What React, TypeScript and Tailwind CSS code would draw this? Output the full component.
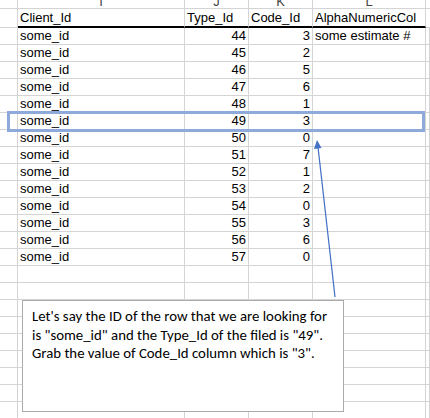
const rows: [number, number, string?][] = [
  [44, 3, "some estimate #"],
  [45, 2],
  [46, 5],
  [47, 6],
  [48, 1],
  [49, 3],
  [50, 0],
  [51, 7],
  [52, 1],
  [53, 2],
  [54, 0],
  [55, 3],
  [56, 6],
  [57, 0],
];

const cell = "shrink-0 border-r border-b border-[#d4d4d4] h-[17px] leading-[16px] whitespace-nowrap overflow-hidden";

function EmptyRow() {
  return (
    <div className="flex">
      <div className={`${cell} w-[18px]`} />
      <div className={`${cell} w-[167px]`} />
      <div className={`${cell} w-[64px]`} />
      <div className={`${cell} w-[64px]`} />
      <div className={`${cell} w-[113px]`} />
      <div className={`${cell} flex-1`} />
    </div>
  );
}

export default function App() {
  return (
    <div className="relative w-[430px] h-[418px] overflow-hidden bg-white text-black text-[13px] font-['Liberation_Sans',Arial,sans-serif]">
      {/* column letters, cut off at the top */}
      <div className="flex h-[9px] border-b border-[#d4d4d4] overflow-hidden text-[#444] leading-[16px]">
        <div className="w-[18px] shrink-0 border-r border-[#d4d4d4]" />
        {[
          ["I", "w-[167px]"],
          ["J", "w-[64px]"],
          ["K", "w-[64px]"],
          ["L", "w-[113px]"],
        ].map(([l, w]) => (
          <div key={l} className={`${w} shrink-0 border-r border-[#d4d4d4] text-center -mt-[6px]`}>
            {l}
          </div>
        ))}
        <div className="flex-1" />
      </div>

      {/* header row */}
      <div className="flex h-[19px] leading-[17px]">
        <div className="w-[18px] shrink-0 border-r border-b border-[#d4d4d4]" />
        <div className="w-[167px] shrink-0 border-r border-[#d4d4d4] border-b-2 border-b-black px-[2px]">Client_Id</div>
        <div className="w-[64px] shrink-0 border-r border-[#d4d4d4] border-b-2 border-b-black px-[2px]">Type_Id</div>
        <div className="w-[64px] shrink-0 border-r border-[#d4d4d4] border-b-2 border-b-black px-[2px]">Code_Id</div>
        <div className="w-[113px] shrink-0 border-r border-[#d4d4d4] border-b-2 border-b-black px-[2px] whitespace-nowrap">AlphaNumericCol</div>
        <div className="flex-1 border-b border-[#d4d4d4]" />
      </div>

      {/* data rows */}
      {rows.map(([type, code, alpha], i) => (
        <div key={type} className="flex">
          <div className={`${cell} w-[18px] ${i === 0 ? "h-[16px]" : ""}`} />
          <div className={`${cell} w-[167px] px-[2px] ${i === 0 ? "h-[16px]" : ""}`}>some_id</div>
          <div className={`${cell} w-[64px] pr-[2px] text-right ${i === 0 ? "h-[16px]" : ""}`}>{type}</div>
          <div className={`${cell} w-[64px] pr-[2px] text-right ${i === 0 ? "h-[16px]" : ""}`}>{code}</div>
          <div className={`${cell} w-[113px] px-[2px] ${i === 0 ? "h-[16px]" : ""}`}>{alpha ?? ""}</div>
          <div className={`${cell} flex-1 ${i === 0 ? "h-[16px]" : ""}`} />
        </div>
      ))}
      {Array.from({ length: 9 }).map((_, i) => (
        <EmptyRow key={i} />
      ))}

      {/* highlight around row 49 */}
      <div className="absolute left-[7px] top-[111px] w-[418px] h-[21px] border-[3px] border-[#8eaadb]" />

      {/* arrow */}
      <svg className="absolute left-0 top-0" width="430" height="418" viewBox="0 0 430 418">
        <line x1="318" y1="147" x2="335" y2="297" stroke="#4472c4" strokeWidth="1.25" />
        <polygon points="317,140 314,149 321.5,148" fill="#4472c4" />
      </svg>

      {/* callout box */}
      <div className="absolute left-[22px] top-[300px] w-[322px] h-[112px] border border-[#ababab] bg-white pl-[9px] pt-[6px] text-[14.8px] leading-[18.5px] font-['Carlito',Lato,'Open_Sans',sans-serif]">
        Let's say the ID of the row that we are looking for
        <br />
        is "some_id" and the Type_Id of the filed is "49".
        <br />
        Grab the value of Code_Id column which is "3".
      </div>
    </div>
  );
}
